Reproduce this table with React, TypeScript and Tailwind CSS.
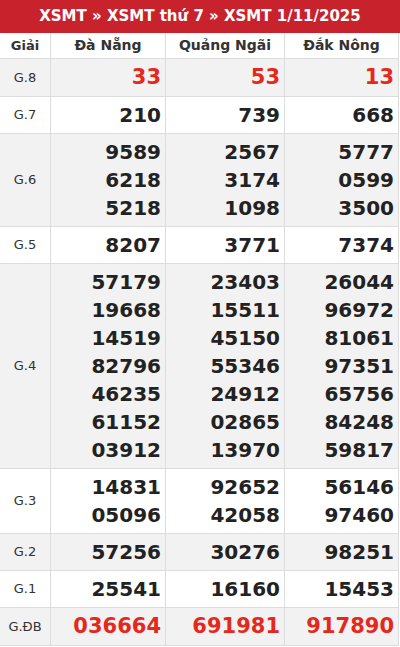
import React from "react";

type Row = { label: string; vals: string[][]; red?: boolean };

const rows: Row[] = [
  { label: "G.8", vals: [["33"], ["53"], ["13"]], red: true },
  { label: "G.7", vals: [["210"], ["739"], ["668"]] },
  { label: "G.6", vals: [["9589", "6218", "5218"], ["2567", "3174", "1098"], ["5777", "0599", "3500"]] },
  { label: "G.5", vals: [["8207"], ["3771"], ["7374"]] },
  {
    label: "G.4",
    vals: [
      ["57179", "19668", "14519", "82796", "46235", "61152", "03912"],
      ["23403", "15511", "45150", "55346", "24912", "02865", "13970"],
      ["26044", "96972", "81061", "97351", "65756", "84248", "59817"],
    ],
  },
  { label: "G.3", vals: [["14831", "05096"], ["92652", "42058"], ["56146", "97460"]] },
  { label: "G.2", vals: [["57256"], ["30276"], ["98251"]] },
  { label: "G.1", vals: [["25541"], ["16160"], ["15453"]] },
  { label: "G.ĐB", vals: [["036664"], ["691981"], ["917890"]], red: true },
];

export default function App() {
  return (
    <div className="w-[400px] h-[647px] bg-white" style={{ fontFamily: '"DejaVu Sans", sans-serif' }}>
      <div className="h-[33px] bg-[#c8232c] text-white font-bold text-[15px] flex items-center justify-center">
        XSMT » XSMT thứ 7 » XSMT 1/11/2025
      </div>
      <div className="w-[399px] border-r border-b border-[#dcdcdc]">
        <div className="grid grid-cols-[51px_115px_119px_1fr] h-[26px] border-b border-[#dcdcdc] font-bold text-[#333]">
          <div className="flex items-center justify-center border-r border-[#dcdcdc] text-[13px]">Giải</div>
          <div className="flex items-center justify-center border-r border-[#dcdcdc] text-[14px]">Đà Nẵng</div>
          <div className="flex items-center justify-center border-r border-[#dcdcdc] text-[14px]">Quảng Ngãi</div>
          <div className="flex items-center justify-center text-[14px]">Đắk Nông</div>
        </div>
        {rows.map((r, i) => (
          <div
            key={r.label}
            className={`grid grid-cols-[51px_115px_119px_1fr] border-b border-[#dcdcdc] last:border-b-0 ${
              i % 2 === 0 ? "bg-[#f2f2f2]" : "bg-white"
            }`}
          >
            <div className="flex items-center justify-center border-r border-[#dcdcdc] text-[13px] text-[#333]">
              {r.label}
            </div>
            {r.vals.map((col, j) => (
              <div
                key={j}
                className={`flex flex-col items-end justify-center py-[4px] pr-[4px] ${j < 2 ? "border-r border-[#dcdcdc]" : ""}`}
              >
                {col.map((v) => (
                  <div
                    key={v}
                    className={`font-bold ${
                      r.red ? "leading-[29px] text-[21px] text-[#e5281b]" : "leading-[28px] text-[20px] text-[#222]"
                    }`}
                  >
                    {v}
                  </div>
                ))}
              </div>
            ))}
          </div>
        ))}
      </div>
    </div>
  );
}
